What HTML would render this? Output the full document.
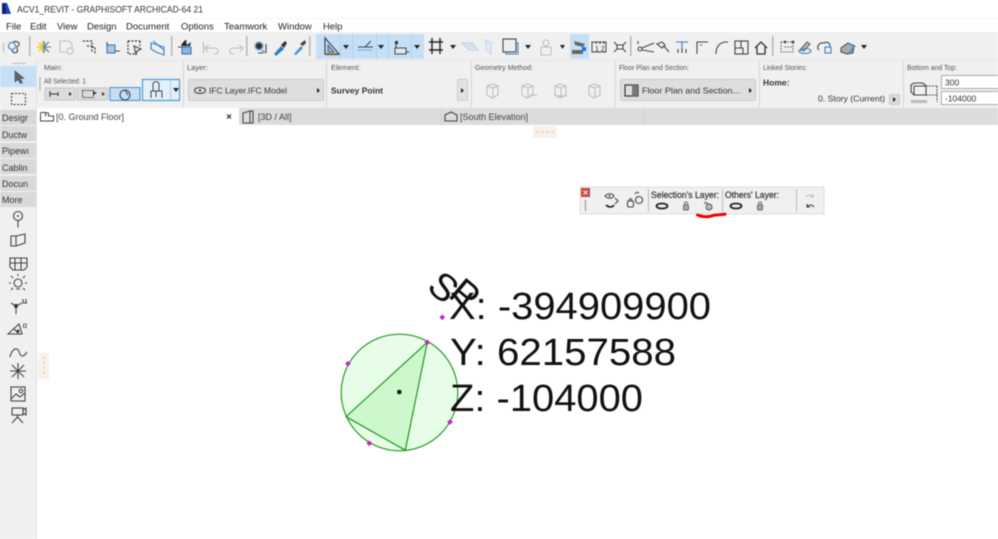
<!DOCTYPE html>
<html><head><meta charset="utf-8"><style>
html,body{margin:0;padding:0;background:#fff;width:998px;height:539px;overflow:hidden}
svg{display:block;position:absolute;left:0;top:0}
.ui{filter:blur(.45px)}
text{font-family:"Liberation Sans",sans-serif;fill:#333}
.m{font-size:9.5px;fill:#222}
.l{font-size:7.5px;fill:#555}
.b{font-size:8.5px;fill:#333}
.s{font-size:8.5px;fill:#333;font-weight:bold}
.t{font-size:9px;fill:#444}
.p{font-size:9px;fill:#333}
.d{font-size:38px;fill:#111}
.i{fill:none;stroke:#444;stroke-width:1.1}
.g{fill:none;stroke:#bbb;stroke-width:1}
.bl{fill:none;stroke:#3a7fc4;stroke-width:1.1}
</style></head><body>
<svg class="ui" width="998" height="539" viewBox="0 0 998 539" xmlns="http://www.w3.org/2000/svg">
<rect width="998" height="539" fill="#fff"/>
<!-- title -->
<path d="M2 14V3h5l4 11z" fill="#1c3fc0"/><path d="M2 14V3l3 0 1 11z" fill="#0b1d70"/>
<text x="17" y="12.5" style="font-size:9.5px" textLength="186" lengthAdjust="spacingAndGlyphs">ACV1_REVIT - GRAPHISOFT ARCHICAD-64 21</text>
<line x1="0" y1="18.5" x2="998" y2="18.5" stroke="#f5f5f5"/>
<!-- menu -->
<text class="m" x="6" y="29.5">File</text><text class="m" x="30" y="29.5">Edit</text><text class="m" x="57" y="29.5">View</text><text class="m" x="87" y="29.5">Design</text><text class="m" x="126" y="29.5">Document</text><text class="m" x="181" y="29.5">Options</text><text class="m" x="224" y="29.5">Teamwork</text><text class="m" x="278" y="29.5">Window</text><text class="m" x="323" y="29.5">Help</text>
<!-- toolbar -->
<rect y="32" width="998" height="28" fill="#f0f0f0"/>
<rect x="316" y="34" width="108" height="25" fill="#c5e0f6"/>
<g fill="#abd0ec"><rect x="340" y="34" width="1" height="25"/><rect x="352" y="34" width="1" height="25"/><rect x="376" y="34" width="1" height="25"/><rect x="388" y="34" width="1" height="25"/><rect x="411" y="34" width="1" height="25"/></g>
<rect x="570" y="34" width="19" height="25" fill="#c5e0f6"/>
<!-- separators -->
<g fill="#b5b5b5"><rect x="3" y="43" width="1" height="9"/><rect x="29" y="36" width="1.5" height="20"/><rect x="171" y="36" width="1.5" height="20"/><rect x="203" y="42" width="1" height="11"/><rect x="246" y="36" width="1.5" height="20"/><rect x="309" y="36" width="1.5" height="20"/><rect x="630" y="36" width="1.5" height="20"/><rect x="772" y="36" width="1.5" height="20"/></g>
<!-- toolbar icons -->
<circle cx="12" cy="46" r="3.5" class="bl"/><path d="M13 42c5-2 8 2 5 4-3 2 1 4-1 6-2 2-5 0-5-2" class="i"/>
<path d="M37 47h6M43 41v12M39 43l8 8M47 43l-8 8" stroke="#f5c518" stroke-width="1.5" fill="none"/><path d="M44 41v12M44 47h7M44 47l5-5M44 47l5 5" class="bl"/>
<path d="M60 41h9l3 3v5M60 41v11h6" class="g"/><circle cx="70" cy="51" r="3" class="g"/>
<path d="M83 41h9v12M92 47h3v7M87 46h5" stroke="#333" fill="none" stroke-dasharray="2 1.5" stroke-width="1.2"/>
<rect x="107" y="45" width="8" height="8" fill="#a9c9e8" stroke="#3a6ea8"/><path d="M107 42v3M115 51h5" class="i"/>
<path d="M128 41h12M128 41v13h7M140 41v5" stroke="#333" fill="none" stroke-dasharray="2 1.500" stroke-width="1.2"/><path d="M134 46l7 3-4 2-1 4z" class="i"/>
<path d="M151 43l13 4v8l-8-3-5-3z" class="bl"/><path d="M153 41l11 9" class="bl"/>
<path d="M181 45l4-5 2 5 4-3-1 4h-8z" fill="#222"/><rect x="182" y="47" width="9" height="7" fill="#8cb7de" stroke="#2f6fa8"/><path d="M178 47h5M186 40v4" class="i"/>
<path d="M208 52l-3-4 4-3M206 48h9c4 0 5 6-1 6" class="g"/><path d="M240 52l3-4-4-3M242 48h-9c-4 0-5 6 1 6" class="g"/>
<circle cx="259" cy="46" r="4" fill="#333" stroke="#8cb7de" stroke-width="1.5"/><path d="M262 50l3 3" stroke="#4a8bd0" stroke-width="1.5"/><path d="M266 44v9M258 53h5" class="i"/>
<path d="M274 54l7-8 3 3-8 7z" fill="#2f7bd0"/><path d="M281 45l4-4 2 2-3 5z" fill="#333"/>
<path d="M294 54l7-8 2 2-7 7z" fill="#4a8bd0"/><path d="M300 44l5-4 1 3-3 3z" fill="#444"/>
<path d="M325 38v16h14z" fill="none" stroke="#444" stroke-width="1.2"/><path d="M328 45v7h6z" fill="#8cb7de" stroke="#444" stroke-width=".8"/><path d="M325 55h14" stroke="#c9964a"/>
<path d="M343 45h6l-3 4zM378 45h6l-3 4zM414 45h6l-3 4zM450 45h6l-3 4zM525 45h6l-3 4zM560 45h5l-2.500 4zM861 45h6l-3 4z" fill="#222"/>
<path d="M358 47h15M371 41l-6 6" class="i"/><path d="M358 50h15" stroke="#4a8bd0" stroke-dasharray="2 1"/>
<path d="M396 43v6" class="i"/><rect x="395" y="48" width="11" height="6" fill="#dce9f5" stroke="#444"/><rect x="395" y="41" width="3" height="3" fill="#333"/><path d="M406 52h3" class="i"/>
<path d="M429 42h14M429 50h14M432 38v16M440 38v16" stroke="#222" stroke-width="1.4"/>
<path d="M462 43h10l6 7h-9z" fill="#d8e4f1" stroke="#bcd1e8"/>
<path d="M486 40l5 3v11l-5-4z" fill="#e4edf6" stroke="#bcd1e8"/>
<rect x="503" y="39" width="13" height="13" fill="#eee" stroke="#444" stroke-width="1.1"/><path d="M516 43h2v11h-12v-2" class="bl"/>
<rect x="541" y="47" width="10" height="8" rx="1" class="g"/><circle cx="546" cy="43" r="3" class="g"/>
<path d="M574 41l11 3-2 3-8-2z" fill="#666"/><path d="M572 50h11v4h-11z" fill="#666"/><rect x="582" y="47" width="4" height="4" fill="#1a73e8"/>
<rect x="592" y="42" width="14" height="10" fill="none" stroke="#444"/><path d="M596 42v2M600 42v2M604 42v2" class="i"/><text x="595" y="51" style="font-size:7px">1 2</text>
<path d="M614 42l3 3h6l3-3M614 52l3-3h6l3 3M617 45v4M623 45v4" class="i"/>
<path d="M638 41v3M642 48l12-5M642 50l12 2" class="i"/><circle cx="640" cy="49" r="2" class="i"/>
<path d="M657 44l5-2 3 3-3 3zM664 46l5 6" class="i"/>
<path d="M676 42h12M682 42v7" class="bl"/><path d="M678 53v-4M682 53v-5M686 53v-4" class="i"/>
<path d="M697 54v-12h8M705 42h3M702 45h-2" class="i"/>
<path d="M716 54c0-7 3-11 9-12M725 42h3" class="i"/>
<rect x="735" y="41" width="13" height="13" class="i"/><path d="M735 48h8v6M741 41v7" class="i"/>
<path d="M755 48l6-6 6 6M757 47v7h8v-7" fill="none" stroke="#333" stroke-width="1.3"/>
<path d="M781 42h12v10h-12zM784 47h8" stroke="#777" fill="none" stroke-dasharray="2 1"/><circle cx="785" cy="42" r="1.400" fill="#444"/><circle cx="793" cy="42" r="1.400" fill="#444"/>
<path d="M800 50l7-8 3 2-6 7z" fill="#bbb" stroke="#555"/><ellipse cx="805" cy="51" rx="6" ry="2.500" class="bl"/>
<path d="M819 50c-3-3 0-8 5-7 3-2 6 0 6 3" class="i"/><rect x="825" y="47" width="6" height="6" class="bl"/>
<path d="M841 48l7-5 6 3-1 7-6 1-6-2z" fill="#aaa" stroke="#444"/><path d="M848 43l7 3-6 7" class="bl"/>
<!-- info box -->
<rect y="60" width="998" height="48" fill="#f0f0f0"/><rect y="60" width="998" height="1" fill="#e6e6e6"/>
<g fill="#d5d5d5"><rect x="183" y="61" width="1" height="46"/><rect x="326" y="61" width="1" height="46"/><rect x="471" y="61" width="1" height="46"/><rect x="615" y="61" width="1" height="46"/><rect x="759" y="61" width="1" height="46"/><rect x="903" y="61" width="1" height="46"/></g>
<text class="l" x="44" y="70">Main:</text><text class="l" x="44" y="83.500" textLength="42" lengthAdjust="spacingAndGlyphs">All Selected: 1</text>
<rect x="39.500" y="77" width="1" height="14" fill="#aaa"/>
<rect x="45" y="88" width="30" height="12" rx="1" fill="#dcdcdc" stroke="#c4c4c4"/><path d="M50 94h8M50 91v6M58 92v4" stroke="#333" fill="none"/><path d="M69 92l3 2-3 2z" fill="#333"/>
<rect x="77" y="88" width="31" height="12" rx="1" fill="#dcdcdc" stroke="#c4c4c4"/><rect x="82.500" y="90.500" width="11" height="7" fill="none" stroke="#333" stroke-dasharray="1.500 1"/><path d="M93 91l4 2-4 2zM102 92l3 2-3 2z" fill="#333"/>
<rect x="110" y="87.500" width="30" height="13" fill="#c4dff5" stroke="#4a8ec9"/><circle cx="125" cy="95" r="5" class="i"/><path d="M125 90l3 5" class="i" stroke-width="2"/>
<rect x="142.500" y="79.500" width="37" height="21" fill="#e3f0fa" stroke="#4a9ad8" stroke-width="1.200"/><rect x="170" y="80" width="1" height="20" fill="#a8cde9"/><path d="M173 88h6l-3 4z" fill="#222"/>
<path d="M153 84c0-3 6-3 6 0v7h-6zM151 91h11v7M151 91v7M156 91v6" fill="none" stroke="#444"/>
<text class="l" x="187" y="70">Layer:</text>
<rect x="188.500" y="79.500" width="135" height="21" rx="1" fill="#dedede" stroke="#cbcbcb"/>
<ellipse cx="200" cy="90.500" rx="5.500" ry="3" class="i" stroke-width="1"/><circle cx="200" cy="90.500" r="1.200" fill="#444"/>
<text class="b" x="209" y="93.500" textLength="78" lengthAdjust="spacingAndGlyphs">IFC Layer.IFC Model</text><path d="M317 88l3 2.500-3 2.500z" fill="#222"/>
<text class="l" x="331" y="70">Element:</text><text class="s" x="331" y="93.500" textLength="52" lengthAdjust="spacingAndGlyphs">Survey Point</text>
<rect x="457.500" y="79.500" width="10" height="21" rx="1" fill="#e2e2e2" stroke="#ccc"/><path d="M461 88l3 2.500-3 2.500z" fill="#222"/>
<text class="l" x="475" y="70" textLength="58" lengthAdjust="spacingAndGlyphs">Geometry Method:</text>
<g class="g"><path d="M487 86l5-2 6 2v9l-6 3-5-3zM487 86l6 2 5-2M493 88v9"/><path d="M522 86l5-2 6 2v9l-6 3-5-3zM522 86l6 2 5-2M528 88v9M530 95h7"/><path d="M555 86l5-2 6 2v9l-6 3-5-3zM555 86l6 2 5-2M561 88v9M555 96h12"/><path d="M589 86l5-2 6 2v9l-6 3-5-3zM589 86l6 2 5-2M595 88v9"/></g>
<text class="l" x="619" y="70" textLength="70" lengthAdjust="spacingAndGlyphs">Floor Plan and Section:</text>
<rect x="620.500" y="79.500" width="135" height="21" rx="1" fill="#dedede" stroke="#cbcbcb"/>
<rect x="625" y="85" width="13" height="11" fill="none" stroke="#333" stroke-width="1.200"/><rect x="632" y="85" width="6" height="11" fill="#777"/>
<text class="b" x="642" y="93.500" textLength="98" lengthAdjust="spacingAndGlyphs">Floor Plan and Section...</text><path d="M749 88l3 2.500-3 2.500z" fill="#222"/>
<text class="l" x="763" y="70" textLength="44" lengthAdjust="spacingAndGlyphs">Linked Stories:</text><text class="b" x="763" y="85.500" style="font-weight:bold">Home:</text>
<text class="b" x="818" y="101.500" textLength="67" lengthAdjust="spacingAndGlyphs">0. Story (Current)</text>
<rect x="889.500" y="94.500" width="10" height="10" rx="1" fill="#dcdcdc" stroke="#ccc"/><path d="M893 97l3 2.500-3 2.500z" fill="#222"/>
<text class="l" x="907" y="70" textLength="50" lengthAdjust="spacingAndGlyphs">Bottom and Top:</text>
<rect x="941.500" y="75.500" width="58" height="13" fill="#fff" stroke="#aaa"/><rect x="941.500" y="91.500" width="58" height="13" fill="#fff" stroke="#aaa"/>
<text class="b" x="945" y="85.500">300</text><text class="b" x="945" y="101.500">-104000</text>
<path d="M911 85l3-2h9l3 3v9h-12l-3-3zM914 86h12M914 86v9" class="i"/><path d="M926 86h11M926 95h11M937 86v16" stroke="#555" fill="none" stroke-dasharray="2 1"/><rect x="911" y="100" width="16" height="3" fill="#bbb"/>
<!-- tabs -->
<rect y="108" width="998" height="17" fill="#dcdcdc"/>
<rect x="37" y="108" width="202" height="17" fill="#fff"/>
<rect x="441" y="108" width="1" height="17" fill="#cfcfcf"/><rect x="643" y="108" width="1" height="17" fill="#cfcfcf"/>
<path d="M40.500 112.500h5v4M45.500 113h3v3h5v5h-13v-8" fill="none" stroke="#444"/>
<text class="t" x="56" y="120">[0. Ground Floor]</text>
<path d="M227 114.500l4 4M231 114.500l-4 4" stroke="#222" stroke-width="1.100"/>
<path d="M243 113l7-2v12h-7zM250 111h3v12h-3" class="i"/><text class="t" x="258" y="120">[3D / All]</text>
<path d="M445 121v-6l6-3 6 3v6z" class="i"/><text class="t" x="460" y="120">[South Elevation]</text>
<!-- left panel -->
<rect x="0" y="60" width="36" height="479" fill="#f0f0f0"/><rect x="36" y="60" width="1" height="479" fill="#e2e2e2"/>
<rect x="12" y="63" width="14" height="1" fill="#bbb"/>
<rect y="66" width="36" height="21" fill="#c5e0f6"/>
<path d="M15 71v11l3-2.500 2.500 4 2-1-2.500-4h4z" fill="#666" stroke="#444" stroke-width=".6"/>
<rect x="11.500" y="93.500" width="14" height="11" fill="none" stroke="#333" stroke-dasharray="2 1.500"/>
<g fill="#d9d9d9"><rect y="110" width="36" height="15"/><rect y="126" width="36" height="15"/><rect y="143" width="36" height="15"/><rect y="159" width="36" height="15"/><rect y="176" width="36" height="15"/><rect y="192" width="36" height="15"/></g>
<text class="p" x="2" y="121">Desigr</text><text class="p" x="2" y="138">Ductw</text><text class="p" x="2" y="154">Pipewı</text><text class="p" x="2" y="171">Cablin</text><text class="p" x="2" y="187">Docun</text><text class="p" x="2" y="203">More</text>
<circle cx="18" cy="216" r="4.500" class="i"/><circle cx="18" cy="216" r="1" fill="#444"/><path d="M18 220.500v7" class="i"/>
<path d="M11 236h5v10h-5zM16 236l9-2v9l-9 3" class="i"/>
<path d="M10 258h17v9l-3 3h-11l-3-3zM10 263h17M15 258v12M21 258v12" class="i"/>
<circle cx="18" cy="283" r="4" class="i"/><path d="M16 289h4M11 283H9M27 283h-2M13 278l-2-2M23 278l2-2M13 288l-2 2M23 288l2 2M18 276v-2" class="i"/>
<path d="M16 306l-5-3M16 306v8M16 306l6-3M23 303v-4M26 303v-4M23 303h4" class="i"/><circle cx="16" cy="306" r="2" fill="#333"/>
<path d="M8 334l11-10 3 10zM14 329l5 5" class="i"/><circle cx="18" cy="331" r="1.500" fill="#333"/><text x="22.500" y="328" style="font-size:8px">α</text>
<path d="M10 357c1-5 4-9 7-8 3 1 2 7 5 7s4-3 5-4" class="i"/>
<path d="M10 371h16M18 363v16M12 365l12 12M24 365l-12 12" class="i" stroke-width="1"/>
<rect x="11" y="387" width="14" height="14" class="i"/><path d="M11 399l5-5 4 3 5-4" class="i"/><circle cx="21" cy="391" r="1.800" class="i"/>
<rect x="12" y="408" width="11" height="7" class="i"/><path d="M23 410l3-2v7l-3-2M17.500 415v2M12 423l5.500-6 5.500 6" class="i"/>
<!-- grips -->
<rect x="533" y="126" width="24" height="12" fill="#f6f1ec"/><path d="M536 132h18" stroke="#f0c49a" stroke-dasharray="3 2"/>
<rect x="38" y="353" width="11" height="26" fill="#f6f1ec"/><path d="M44 356v20" stroke="#f0c49a" stroke-dasharray="3 2"/>
<!-- floating palette -->
<rect x="580" y="187" width="244" height="27" fill="#f0f0f0" stroke="#ddd"/>
<rect x="581" y="188" width="9" height="9" fill="#c64545"/><path d="M583.500 190.500l4 4M587.500 190.500l-4 4" stroke="#fff"/>
<rect x="585" y="200" width="1" height="11" fill="#888"/>
<path d="M605 196c3-3 7-3 9 0-2 3-6 3-9 0z" class="i"/><circle cx="609.500" cy="196" r="1" fill="#444"/><path d="M606 205c3 3 7 2 8 0" fill="none" stroke="#222" stroke-width="1.600"/><path d="M615 198l3 3-3 3" class="i"/>
<rect x="627.500" y="201" width="6" height="6" rx="1.500" class="i"/><path d="M629 201c0-3 3-3 3 0" class="i"/><circle cx="639" cy="200" r="3.500" class="i"/><path d="M635 194c1-2 3-2 4-1" class="i"/>
<g fill="#bbb"><rect x="648" y="189" width="1" height="23"/><rect x="722" y="189" width="1" height="23"/><rect x="796" y="189" width="1" height="23"/></g>
<text x="651" y="198" style="font-size:9px" fill="#333" stroke="#333" stroke-width=".2" textLength="68" lengthAdjust="spacingAndGlyphs">Selection's Layer:</text>
<text x="725" y="198" style="font-size:9px" fill="#333" stroke="#333" stroke-width=".2" textLength="54" lengthAdjust="spacingAndGlyphs">Others' Layer:</text>
<ellipse cx="662" cy="206" rx="5.500" ry="2.500" fill="none" stroke="#222" stroke-width="1.800"/>
<rect x="683.500" y="205" width="5" height="5" rx="1" fill="#aaa" stroke="#666"/><path d="M684.500 205v-1.500c0-2 3-2 3 0v1.500" fill="none" stroke="#666"/>
<circle cx="709" cy="207" r="3" fill="#bbb" stroke="#555"/><path d="M704.500 204c0-2 3-2 3 0" fill="none" stroke="#555"/>
<ellipse cx="736" cy="206" rx="5.500" ry="2.500" fill="none" stroke="#222" stroke-width="1.800"/>
<rect x="757.500" y="205" width="5" height="5" rx="1" fill="#aaa" stroke="#666"/><path d="M758.500 205v-1.500c0-2 3-2 3 0v1.500" fill="none" stroke="#666"/>
<path d="M806 197c2-3 6-2 7 0M813 194v3h-3" fill="none" stroke="#bbb"/><path d="M814 207c-2-3-6-2-7 0M807 204v3h3" fill="none" stroke="#333"/>
<path d="M697.500 215c5 2.200 12 2.200 16 .3l11.500-1" fill="none" stroke="#f00000" stroke-width="3" stroke-linecap="round"/>
<!-- drawing -->
<circle cx="399.500" cy="392.500" r="58.300" fill="#e8fde8" stroke="#249a24" stroke-width="1.200"/>
<path d="M427.300 342.300L346 416.700 405.300 450.300z" fill="#cdf8cd" stroke="#1f961f" stroke-width="1.200"/>
<circle cx="399.300" cy="392" r="2.300" fill="#111"/>
<g fill="#c81fc8"><rect x="440.300" y="315.300" width="4" height="4" transform="rotate(45 442.300 317.300)"/><rect x="346" y="361.700" width="4" height="4" transform="rotate(45 348 363.700)"/><rect x="448" y="420" width="4" height="4" transform="rotate(45 450 422)"/><rect x="367.300" y="441.300" width="4" height="4" transform="rotate(45 369.300 443.300)"/><rect x="425.300" y="340.300" width="4" height="4" transform="rotate(45 427.300 342.300)"/></g>
<text class="d" x="449" y="319" textLength="262" lengthAdjust="spacingAndGlyphs">X: -394909900</text>
<text class="d" x="450" y="365" textLength="226" lengthAdjust="spacingAndGlyphs">Y: 62157588</text>
<text class="d" x="450" y="411" textLength="193" lengthAdjust="spacingAndGlyphs">Z: -104000</text>
<text x="0" y="0" transform="translate(425.500 289) rotate(40)" style="font-size:38px;fill:#111">S</text>
<text x="0" y="0" transform="translate(447 296) rotate(40)" style="font-size:38px;fill:#111">P</text>
</svg>
</body></html>
